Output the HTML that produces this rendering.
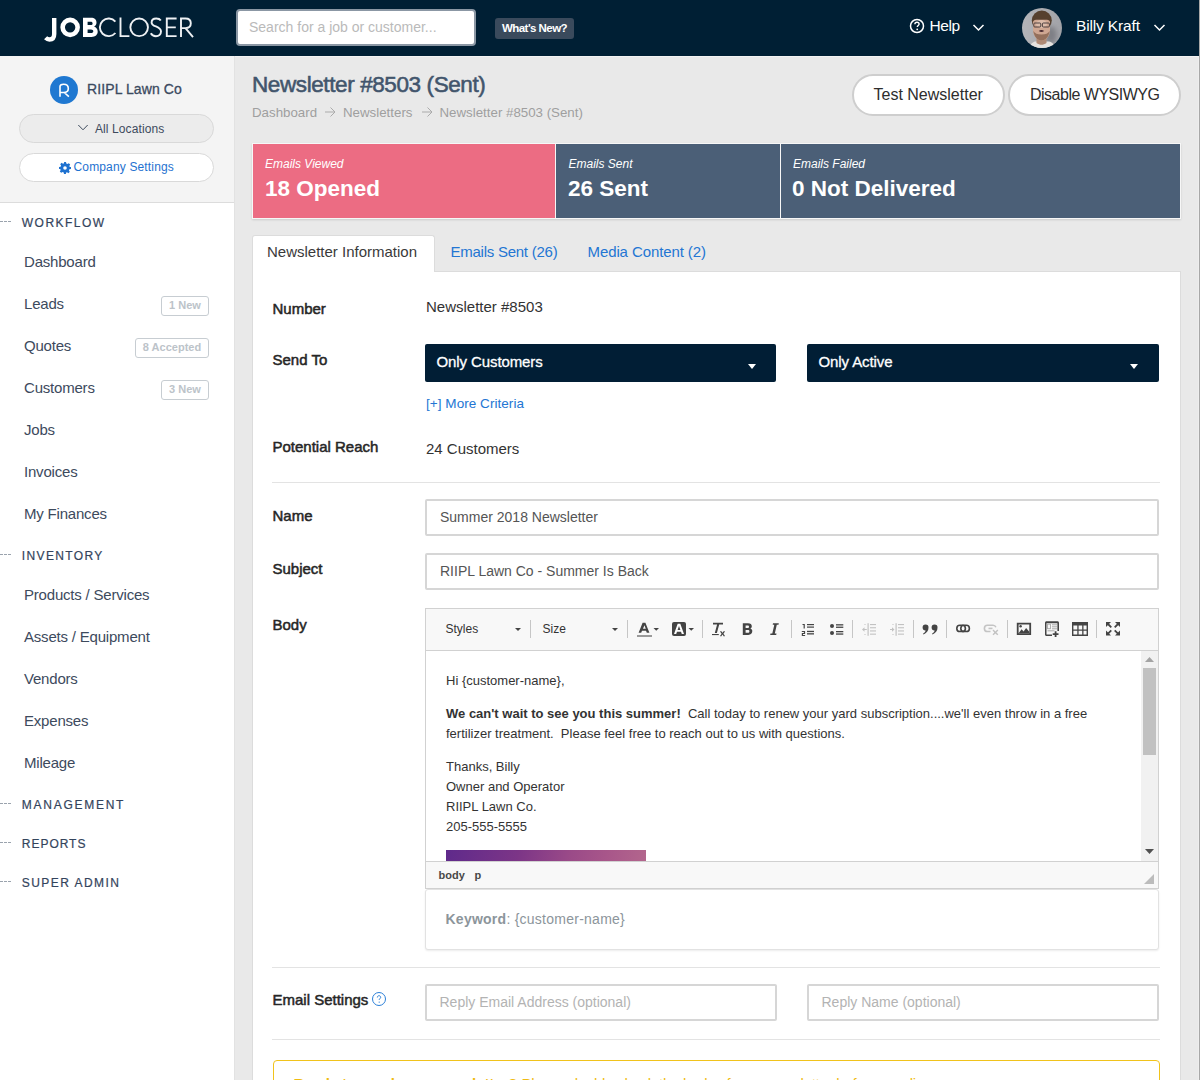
<!DOCTYPE html>
<html><head><meta charset="utf-8">
<style>
*{box-sizing:border-box;margin:0;padding:0}
html,body{width:1200px;height:1080px;overflow:hidden;background:#e9e9e9;font-family:"Liberation Sans",sans-serif;color:#333}
.a{position:absolute}
.t{position:absolute;white-space:nowrap;line-height:1}
#hdr{position:absolute;left:0;top:0;width:1200px;height:56px;background:#001f34}
.nav{color:#3d4a5d;font-size:15px;letter-spacing:-0.2px}
.sec{color:#33445c;font-size:12px;-webkit-text-stroke:0.2px #33445c}
.dash{position:absolute;left:0;width:11px;height:1px;border-top:1px dashed #9aa3ad}
.badge{position:absolute;height:20px;border:1px solid #c7cdd2;border-radius:3px;color:#bcc3c9;font-size:11px;font-weight:bold;line-height:17px;text-align:center}
.lbl{color:#262626;font-size:15px;-webkit-text-stroke:0.5px #262626}
.val{color:#333;font-size:15px}
.inp{position:absolute;background:#fff;border:2px solid #d6d6d6;border-radius:2px}
.sel{position:absolute;background:#011e35;border-radius:2px}
.sep{position:absolute;width:1px;background:#d3d3d3}
.hr{position:absolute;left:272px;width:888px;height:1px;background:#e3e3e3}
</style></head><body>
<!-- HEADER -->
<div id="hdr">
  <svg class="a" style="left:40px;top:12px" width="160" height="34" viewBox="40 12 160 34">
   <path d="M54.2 17.9V34C54.2 38 52 39.5 49.5 39.5C47.8 39.5 46.6 38.8 45.6 37.8" fill="none" stroke="#fff" stroke-width="4.4"/>
   <circle cx="70.15" cy="27.35" r="7.5" fill="none" stroke="#fff" stroke-width="4.6"/>
   <path fill="#fff" fill-rule="evenodd" d="M83 17.7H91C94.5 17.7 96.5 19.6 96.5 22.4C96.5 24.4 95.5 25.8 94 26.6C96.3 27.4 97.7 29.3 97.7 31.6C97.7 34.8 95.4 37 91.5 37H83ZM87.6 21.8H90.6C91.9 21.8 92.6 22.5 92.6 23.4C92.6 24.3 91.9 25 90.6 25H87.6ZM87.6 29.4H91C92.5 29.4 93.3 30.2 93.3 31.2C93.3 32.2 92.5 33 91 33H87.6Z"/>
   <g fill="none" stroke="#eef1f4" stroke-width="1.9">
    <path d="M115.4 21.7A8.8 8.8 0 1 0 115.4 33.0"/>
    <path d="M120.5 17.6V36.1H129.4"/>
    <circle cx="139.15" cy="27.35" r="8.8"/>
    <path d="M160.8 20.5C159.8 18.9 158.2 18.5 156.3 18.5C153.4 18.5 151.6 20.1 151.6 22.4C151.6 27.3 161 25.6 161 31.6C161 34.5 158.7 36.2 155.9 36.2C153.6 36.2 151.8 35.1 150.8 33.3"/>
    <path d="M176.6 18.5H166.8V36.1H176.6M166.8 27.35H175.8"/>
    <path d="M181 37.1V18.5H185.5C188.8 18.5 190.8 20.5 190.8 23.3C190.8 26.1 188.8 28.1 185.5 28.1H181M185.5 28.1L193 37.1"/>
   </g>
  </svg>
  <div class="a" style="left:236px;top:9px;width:240px;height:37px;background:#fff;border:2px solid #8b97a4;border-radius:4px"></div>
  <div class="t" style="left:249px;top:20px;font-size:14px;color:#bababa">Search for a job or customer...</div>
  <div class="a" style="left:495px;top:18px;width:79px;height:21px;background:#3a4a5c;border-radius:3px"></div>
  <div class="t" style="left:502px;top:22.6px;font-size:11.5px;color:#fff;font-weight:bold;letter-spacing:-0.55px">What's New?</div>
  <svg class="a" style="left:909px;top:18.3px" width="16" height="16" viewBox="0 0 16 16"><circle cx="8" cy="8" r="6.5" fill="none" stroke="#fff" stroke-width="1.5"/><path d="M5.9 6.3c0-1.3 1-2.1 2.1-2.1s2.1.8 2.1 1.9c0 1.4-1.8 1.5-1.8 3" fill="none" stroke="#fff" stroke-width="1.4"/><circle cx="8.2" cy="11.3" r="0.9" fill="#fff"/></svg>
  <div class="t" style="left:929.5px;top:18.4px;font-size:15.5px;color:#fff;letter-spacing:-0.4px">Help</div>
  <svg class="a" style="left:972px;top:23px" width="13" height="9" viewBox="0 0 13 9"><path d="M1.5 2l5 5 5-5" fill="none" stroke="#fff" stroke-width="1.5"/></svg>
  <svg class="a" style="left:1022px;top:8px" width="40" height="40" viewBox="0 0 40 40">
    <defs><clipPath id="av"><circle cx="20" cy="20" r="20"/></clipPath>
    <filter id="bl" x="-20%" y="-20%" width="140%" height="140%"><feGaussianBlur stdDeviation="0.6"/></filter>
    <filter id="bl2" x="-50%" y="-50%" width="200%" height="200%"><feGaussianBlur stdDeviation="2.5"/></filter>
    <linearGradient id="avbg" x1="0" y1="0" x2="1" y2="0"><stop offset="0" stop-color="#b4b5b9"/><stop offset="1" stop-color="#a2a3a8"/></linearGradient></defs>
    <g clip-path="url(#av)">
      <rect width="40" height="40" fill="url(#avbg)"/>
      <ellipse cx="29" cy="27" rx="6" ry="9" fill="#7e7f85" filter="url(#bl2)"/>
      <g filter="url(#bl)">
      <path d="M7 41c1-5 4-7 6-7.5h14c3 .5 5 2.5 6 7.5z" fill="#e6e2df"/>
      <path d="M14.5 29h10v6c-1.5 1.2-3.5 1.8-5 1.8s-3.5-.6-5-1.8z" fill="#b08a74"/>
      <ellipse cx="19.8" cy="12.5" rx="10" ry="10" fill="#56402f"/>
      <path d="M11 14c0-1 1.5-2.3 3-2.3h11c1.5 0 3 1.3 3 2.3v8c0 6-4 10.5-8.5 10.5S11 28 11 22z" fill="#cfa792"/>
      <ellipse cx="19.5" cy="16" rx="5.5" ry="4" fill="#dcbcaa"/>
      <path d="M11.3 23c.8 5.5 4 9.5 8.2 9.5s7.4-4 8.2-9.5c-1.5 2.5-4 3.5-8.2 3.5s-6.7-1-8.2-3.5z" fill="#94705c"/>
      <g fill="none" stroke="#3e3434" stroke-width="0.9"><rect x="11.8" y="15" width="7" height="4" rx="1"/><rect x="20.4" y="15" width="7" height="4" rx="1"/></g>
      <path d="M16.8 23c1-.8 1.8-1 2.7-1s1.8.2 2.7 1c-.9.6-1.8.9-2.7.9s-1.8-.3-2.7-.9z" fill="#4a2b32"/>
      </g>
    </g>
  </svg>
  <div class="t" style="left:1076px;top:18.4px;font-size:15.5px;color:#fff;letter-spacing:-0.15px">Billy Kraft</div>
  <svg class="a" style="left:1153px;top:23px" width="13" height="9" viewBox="0 0 13 9"><path d="M1.5 2l5 5 5-5" fill="none" stroke="#fff" stroke-width="1.5"/></svg>
</div>

<!-- SIDEBAR -->
<div class="a" style="left:0;top:56px;width:234px;height:1024px;background:#fff"></div>
<div class="a" style="left:0;top:56px;width:234px;height:147px;background:#f4f4f4;border-bottom:1px solid #dcdcdc"></div>
<div class="a" style="left:50px;top:75.8px;width:28px;height:28px;border-radius:50%;background:#1f78d1"></div>
<svg class="a" style="left:50px;top:76px" width="28" height="28" viewBox="50 76 28 28"><path d="M60 96.7V86.6C60 85.1 61.5 84.3 63.6 84.3C66.5 84.3 68.3 86.2 68.3 88.5C68.3 90.9 66.5 92.5 63.6 92.5H60M64.2 92.5L68.9 96.7" fill="none" stroke="#fff" stroke-width="1.6"/></svg>
<div class="t" style="left:87px;top:82px;font-size:14px;color:#3b4a60;letter-spacing:0.1px;-webkit-text-stroke:0.3px #3b4a60">RIIPL Lawn Co</div>
<div class="a" style="left:19px;top:114px;width:195px;height:29px;border-radius:15px;background:#ececec;border:1px solid #d9d9d9"></div>
<svg class="a" style="left:77px;top:124px" width="12" height="8" viewBox="0 0 12 8"><path d="M1.3 1l4.7 4.8 4.7-4.8" fill="none" stroke="#3d4a5d" stroke-width="1"/></svg>
<div class="t" style="left:95px;top:122.6px;font-size:12px;color:#3d4a5d;letter-spacing:0.1px">All Locations</div>
<div class="a" style="left:19px;top:153px;width:195px;height:29px;border-radius:15px;background:#fff;border:1px solid #d9d9d9"></div>
<svg class="a" style="left:59px;top:162px" width="12" height="12" viewBox="0 0 12 12"><path fill="#1f72d0" d="M5 0h2l.3 1.6 1.1.5 1.4-.9 1.4 1.4-.9 1.4.5 1.1L12 5v2l-1.6.3-.5 1.1.9 1.4-1.4 1.4-1.4-.9-1.1.5L7 12H5l-.3-1.6-1.1-.5-1.4.9-1.4-1.4.9-1.4-.5-1.1L0 7V5l1.6-.3.5-1.1-.9-1.4 1.4-1.4 1.4.9 1.1-.5z"/><circle cx="6" cy="6" r="1.8" fill="#fff"/></svg>
<div class="t" style="left:73.5px;top:161.2px;font-size:12px;color:#1f72d0;letter-spacing:0.15px">Company Settings</div>

<div class="dash" style="top:221px"></div>
<div class="t sec" style="left:21.8px;top:217.3px;letter-spacing:1.46px">WORKFLOW</div>
<div class="t nav" style="left:24px;top:253.6px">Dashboard</div>
<div class="t nav" style="left:24px;top:295.6px">Leads</div>
<div class="badge" style="left:161px;top:296px;width:48px">1 New</div>
<div class="t nav" style="left:24px;top:337.6px">Quotes</div>
<div class="badge" style="left:135px;top:338px;width:74px">8 Accepted</div>
<div class="t nav" style="left:24px;top:379.6px">Customers</div>
<div class="badge" style="left:161px;top:380px;width:48px">3 New</div>
<div class="t nav" style="left:24px;top:421.6px">Jobs</div>
<div class="t nav" style="left:24px;top:463.6px">Invoices</div>
<div class="t nav" style="left:24px;top:505.6px">My Finances</div>

<div class="dash" style="top:554px"></div>
<div class="t sec" style="left:21.8px;top:550.3px;letter-spacing:1.36px">INVENTORY</div>
<div class="t nav" style="left:24px;top:586.6px">Products / Services</div>
<div class="t nav" style="left:24px;top:628.6px">Assets / Equipment</div>
<div class="t nav" style="left:24px;top:670.6px">Vendors</div>
<div class="t nav" style="left:24px;top:712.6px">Expenses</div>
<div class="t nav" style="left:24px;top:754.6px">Mileage</div>

<div class="dash" style="top:803px"></div>
<div class="t sec" style="left:21.8px;top:799.3px;letter-spacing:1.73px">MANAGEMENT</div>
<div class="dash" style="top:842px"></div>
<div class="t sec" style="left:21.8px;top:838.3px;letter-spacing:0.97px">REPORTS</div>
<div class="dash" style="top:881px"></div>
<div class="t sec" style="left:21.8px;top:877.3px;letter-spacing:1.44px">SUPER ADMIN</div>
<div class="a" style="left:234px;top:56px;width:1px;height:1024px;background:#e2e2e2"></div>


<!-- MAIN -->
<div class="t" style="left:252px;top:74px;font-size:22.5px;color:#42556c;letter-spacing:-0.4px;-webkit-text-stroke:0.55px #42556c">Newsletter #8503 (Sent)</div>
<div class="t" style="left:252px;top:105.6px;font-size:13.3px;color:#9f9f9f">Dashboard</div>
<svg class="a" style="left:324px;top:106px" width="13" height="12" viewBox="0 0 13 12"><path d="M1 6h10M6.5 1.5L11 6l-4.5 4.5" fill="none" stroke="#ababab" stroke-width="1"/></svg>
<div class="t" style="left:343px;top:105.6px;font-size:13.3px;color:#9f9f9f">Newsletters</div>
<svg class="a" style="left:421px;top:106px" width="13" height="12" viewBox="0 0 13 12"><path d="M1 6h10M6.5 1.5L11 6l-4.5 4.5" fill="none" stroke="#ababab" stroke-width="1"/></svg>
<div class="t" style="left:439.5px;top:105.6px;font-size:13.3px;color:#9f9f9f">Newsletter #8503 (Sent)</div>

<div class="a" style="left:852px;top:74px;width:153px;height:42px;border-radius:21px;background:#fff;border:2px solid #cecece"></div>
<div class="t" style="left:873.5px;top:87.3px;font-size:16px;color:#2d2d2d">Test Newsletter</div>
<div class="a" style="left:1008px;top:74px;width:173px;height:42px;border-radius:21px;background:#fff;border:2px solid #cecece"></div>
<div class="t" style="left:1030px;top:87.3px;font-size:16px;color:#2d2d2d;letter-spacing:-0.5px">Disable WYSIWYG</div>

<div class="a" style="left:252px;top:143px;width:929px;height:76px;background:#f7f7f7;box-shadow:0 1px 2px rgba(0,0,0,0.12)"></div>
<div class="a" style="left:253px;top:144px;width:302px;height:74px;background:#ec6c83"></div>
<div class="a" style="left:556px;top:144px;width:224px;height:74px;background:#4b5f77"></div>
<div class="a" style="left:781px;top:144px;width:399px;height:74px;background:#4b5f77"></div>
<div class="t" style="left:265px;top:157.5px;font-size:12px;color:#fff;font-style:italic">Emails Viewed</div>
<div class="t" style="left:265px;top:177.8px;font-size:22.5px;color:#fff;font-weight:bold">18 Opened</div>
<div class="t" style="left:568.5px;top:157.5px;font-size:12px;color:#fff;font-style:italic">Emails Sent</div>
<div class="t" style="left:568px;top:177.8px;font-size:22.5px;color:#fff;font-weight:bold">26 Sent</div>
<div class="t" style="left:793px;top:157.5px;font-size:12px;color:#fff;font-style:italic">Emails Failed</div>
<div class="t" style="left:792px;top:177.8px;font-size:22.5px;color:#fff;font-weight:bold">0 Not Delivered</div>

<!-- tabs -->
<div class="a" style="left:252px;top:235px;width:183px;height:37px;background:#fff;border:1px solid #dcdcdc;border-bottom:none;border-radius:3px 3px 0 0"></div>
<div class="t" style="left:267px;top:244.2px;font-size:15px;color:#3a3a3a">Newsletter Information</div>
<div class="t" style="left:450.5px;top:244.2px;font-size:15px;color:#2376d3;letter-spacing:-0.25px">Emails Sent (26)</div>
<div class="t" style="left:587.5px;top:244.2px;font-size:15px;color:#2376d3;letter-spacing:-0.1px">Media Content (2)</div>

<!-- panel -->
<div class="a" style="left:252px;top:271px;width:929px;height:809px;background:#fff;border-left:1px solid #dcdcdc;border-right:1px solid #dcdcdc;border-top:1px solid #dcdcdc"></div>
<div class="a" style="left:253px;top:271px;width:181px;height:2px;background:#fff"></div>


<!-- FORM -->
<div class="t lbl" style="left:272.5px;top:300.6px">Number</div>
<div class="t val" style="left:426px;top:298.6px">Newsletter #8503</div>
<div class="t lbl" style="left:272.5px;top:351.9px">Send To</div>
<div class="sel" style="left:425px;top:344px;width:351px;height:38px"></div>
<div class="t" style="left:436.5px;top:353.6px;font-size:15px;color:#fff;letter-spacing:-0.1px;-webkit-text-stroke:0.3px #fff">Only Customers</div>
<svg class="a" style="left:748px;top:364px" width="8" height="5" viewBox="0 0 8 5"><path d="M0 0h8L4 5z" fill="#fff"/></svg>
<div class="sel" style="left:807px;top:344px;width:352px;height:38px"></div>
<div class="t" style="left:818.5px;top:353.6px;font-size:15px;color:#fff;letter-spacing:-0.1px;-webkit-text-stroke:0.3px #fff">Only Active</div>
<svg class="a" style="left:1130px;top:364px" width="8" height="5" viewBox="0 0 8 5"><path d="M0 0h8L4 5z" fill="#fff"/></svg>
<div class="t" style="left:426px;top:396.8px;font-size:13.5px;color:#2376d3;letter-spacing:0.05px">[+] More Criteria</div>
<div class="t lbl" style="left:272.5px;top:439.3px">Potential Reach</div>
<div class="t val" style="left:426px;top:441.3px">24 Customers</div>
<div class="hr" style="top:482px"></div>

<div class="t lbl" style="left:272.5px;top:507.8px">Name</div>
<div class="inp" style="left:425px;top:499px;width:734px;height:37px"></div>
<div class="t" style="left:440px;top:510.3px;font-size:14px;color:#555">Summer 2018 Newsletter</div>
<div class="t lbl" style="left:272.5px;top:561.2px">Subject</div>
<div class="inp" style="left:425px;top:553px;width:734px;height:37px"></div>
<div class="t" style="left:440px;top:564.2px;font-size:14px;color:#555">RIIPL Lawn Co - Summer Is Back</div>
<div class="t lbl" style="left:272.5px;top:616.7px">Body</div>

<!-- EDITOR -->
<div class="a" style="left:425px;top:608px;width:734px;height:281px;border:1px solid #d1d1d1;background:#f8f8f8"></div>
<div class="a" style="left:426px;top:650px;width:732px;height:1px;background:#d1d1d1"></div>
<div class="a" style="left:426px;top:651px;width:732px;height:210px;background:#fff;overflow:hidden">
  <div class="a" style="left:20px;top:1px;width:690px;font-size:13px;line-height:20px;color:#333">
    <div class="a" style="top:19px;white-space:nowrap">Hi {customer-name},</div>
    <div class="a" style="top:52px;width:690px"><b>We can't wait to see you this summer!</b>&nbsp; Call today to renew your yard subscription....we'll even throw in a free fertilizer treatment.&nbsp; Please feel free to reach out to us with questions.</div>
    <div class="a" style="top:105px;white-space:nowrap">Thanks, Billy<br>Owner and Operator<br>RIIPL Lawn Co.<br>205-555-5555</div>
    <div class="a" style="left:0;top:198px;width:200px;height:40px;background:linear-gradient(100deg,#5f2a8b 0%,#7c3587 35%,#9a4a88 60%,#a8568a 78%,#b4688d 100%)"></div>
  </div>
  <div class="a" style="left:715px;top:0;width:17px;height:210px;background:#f1f1f1"></div>
  <div class="a" style="left:717px;top:17px;width:13px;height:87px;background:#c1c1c1"></div>
  <svg class="a" style="left:719px;top:6px" width="9" height="5" viewBox="0 0 9 5"><path d="M0 5h9L4.5 0z" fill="#a3a3a3"/></svg>
  <svg class="a" style="left:719px;top:198px" width="9" height="5" viewBox="0 0 9 5"><path d="M0 0h9L4.5 5z" fill="#505050"/></svg>
</div>
<div class="a" style="left:426px;top:861px;width:732px;height:1px;background:#d1d1d1"></div>
<div class="t" style="left:438.5px;top:869.5px;font-size:11px;font-weight:bold;color:#484848">body</div>
<div class="t" style="left:474.5px;top:869.5px;font-size:11px;font-weight:bold;color:#484848">p</div>
<svg class="a" style="left:1144px;top:874px" width="10" height="10" viewBox="0 0 10 10"><path d="M10 0V10H0z" fill="#bcbcbc"/></svg>
<div class="a" style="left:425px;top:889px;width:734px;height:61px;border:1px solid #e2e2e2;border-radius:3px;background:#fff;box-shadow:0 1px 2px rgba(0,0,0,0.08)"></div>
<div class="t" style="left:445.5px;top:912px;font-size:14px;color:#8c959b;letter-spacing:0.25px"><b>Keyword</b>: {customer-name}</div>
<!-- TOOLBAR -->
<div class="t" style="left:445.5px;top:623px;font-size:12px;color:#333">Styles</div>
<div class="t" style="left:542.5px;top:623px;font-size:12px;color:#333">Size</div>
<svg class="a" style="left:426px;top:609px" width="732" height="41" viewBox="426 609 732 41">
 <g fill="#c6c6c6">
  <rect x="530" y="620" width="1" height="18"/><rect x="627" y="620" width="1" height="18"/>
  <rect x="702" y="620" width="1" height="18"/><rect x="791" y="620" width="1" height="18"/>
  <rect x="852" y="620" width="1" height="18"/><rect x="913" y="620" width="1" height="18"/>
  <rect x="946" y="620" width="1" height="18"/><rect x="1007" y="620" width="1" height="18"/>
  <rect x="1096" y="620" width="1" height="18"/>
 </g>
 <g fill="#444">
  <path d="M515 628h6l-3 3z"/><path d="M612 628h6l-3 3z"/>
  <path d="M653.5 628h5.5l-2.75 2.75z"/><path d="M688.5 628h5.5l-2.75 2.75z"/>
  <!-- text color A -->
  <path d="M642.6 622.8h2.8l4 10h-2.6l-.8-2.1h-4l-.8 2.1h-2.6zM643 628.8h2.8l-1.4-3.6z"/>
  <rect x="637" y="635" width="15" height="2" fill="#9a9a9a"/>
  <!-- bg color -->
  <rect x="672" y="622" width="14" height="14" rx="2"/>
  <path d="M677.7 623.8h2.6l3.7 10.2h-2.2l-.8-2.2h-4l-.8 2.2h-2.2zM677.6 630h2.8l-1.4-4z" fill="#fff"/>
  <!-- Tx -->
  <path d="M713 622.8h10v1.8h-3.8l-2.3 8.4h-2.1l2.3-8.4h-4.1z"/>
  <rect x="712" y="634" width="6.8" height="1.1"/>
  <path d="M720 631.5l1.1-.6 1.4 1.9 1.4-1.9 1.1.6-1.6 2.2 1.6 2.2-1.1.6-1.4-1.9-1.4 1.9-1.1-.6 1.6-2.2z"/>
  <!-- B -->
  <path d="M742.8 623.2h5.2c2.6 0 3.8 1.3 3.8 3 0 1.1-.6 1.9-1.5 2.3 1.3.4 2 1.4 2 2.6 0 2-1.4 3.9-4 3.9h-5.5zM745.6 625.5v2.5h2c.9 0 1.4-.5 1.4-1.25s-.5-1.25-1.4-1.25zM745.6 630.1v2.6h2.3c1 0 1.5-.55 1.5-1.3s-.5-1.3-1.5-1.3z"/>
  <!-- I -->
  <path d="M773 623.2h5.8l-.3 1.5h-1.7l-2 8.8h1.7l-.3 1.5h-6l.3-1.5h1.8l2-8.8h-1.6z"/>
  <!-- ol -->
  <path d="M802.5 624h2.3v4.6h-1.2v-3.5h-1.1z"/>
  <path d="M801.8 631h3.3v3h-2.1v1h2.1v1h-3.3v-3h2.1v-1h-2.1z"/>
  <rect x="807" y="624" width="7" height="1.2"/><rect x="807" y="626.5" width="7" height="1.2"/>
  <rect x="807" y="630.8" width="7" height="1.3"/><rect x="807" y="633.2" width="7" height="1.3"/>
  <!-- ul -->
  <circle cx="832" cy="626" r="2"/><circle cx="832" cy="633" r="2"/>
  <rect x="836" y="624.2" width="7.3" height="1.3"/><rect x="836" y="626.6" width="7.3" height="1.3"/>
  <rect x="836" y="631" width="7.3" height="1.3"/><rect x="836" y="633.4" width="7.3" height="1.3"/>
  <!-- quote -->
  <path d="M925.5 624.5a3 3 0 0 1 3 3.2c0 3-2 5.5-5 6.8l-.5-.8c1.5-.9 2.4-2 2.6-3.3a2.9 2.9 0 0 1-.1-5.9z"/>
  <path d="M934.5 624.5a3 3 0 0 1 3 3.2c0 3-2 5.5-5 6.8l-.5-.8c1.5-.9 2.4-2 2.6-3.3a2.9 2.9 0 0 1-.1-5.9z"/>
  <!-- image -->
  <path d="M1016.8 622.8h14.3v12.2h-14.3zM1018.6 624.5v8.8h10.7v-8.8z" fill-rule="evenodd"/>
  <circle cx="1020.6" cy="626.3" r="1.2"/>
  <path d="M1018.6 633.3l3-4 2 2.2 2.5-3.5 3.2 3.8v1.5z"/>
  <!-- template -->
  <path d="M1046.5 621.2h11c.8 0 1.5.7 1.5 1.5v8.3h-1.6v-7.8h-10.9v11.2h5.5v1.6h-5.5c-.8 0-1.5-.7-1.5-1.5v-11.8c0-.8.7-1.5 1.5-1.5z"/>
  <rect x="1047.5" y="624.2" width="3" height="4.5" fill="none" stroke="#aaa" stroke-width="0.9"/>
  <rect x="1052" y="624.3" width="5" height="1" fill="#aaa"/><rect x="1052" y="626.3" width="5" height="1" fill="#aaa"/>
  <rect x="1052" y="628.3" width="5" height="1" fill="#aaa"/><rect x="1047.5" y="630.3" width="7" height="1" fill="#aaa"/>
  <path d="M1054.7 631.3h1.8v2h2v1.8h-2v2h-1.8v-2h-2v-1.8h2z"/>
  <!-- table -->
  <path d="M1072 622h16v14h-16zM1073.4 625.6v3.9h3.9v-3.9zM1078.6 625.6v3.9h3.6v-3.9zM1083.5 625.6v3.9h3.1v-3.9zM1073.4 630.8v3.8h3.9v-3.8zM1078.6 630.8v3.8h3.6v-3.8zM1083.5 630.8v3.8h3.1v-3.8z" fill-rule="evenodd"/>
  <!-- maximize -->
  <path d="M1106 622h5l-5 5z"/><path d="M1120 622h-5l5 5z"/><path d="M1106 635.6h5l-5-5z"/><path d="M1120 635.6h-5l5-5z"/>
  <g stroke="#444" stroke-width="1.8"><path d="M1107.5 623.5l3.8 3.8M1118.5 623.5l-3.8 3.8M1107.5 634.1l3.8-3.8M1118.5 634.1l-3.8-3.8"/></g>
  <!-- link -->
  <g fill="none" stroke="#444" stroke-width="1.6"><rect x="956.8" y="625.3" width="8.6" height="6.2" rx="3.1"/><rect x="960.8" y="625.3" width="8.6" height="6.2" rx="3.1"/></g>
 </g>
 <g fill="#c2c2c2">
  <!-- unlink -->
  <g fill="none" stroke="#c4c4c4" stroke-width="1.6"><path d="M990.5 631.5h-3a3.1 3.1 0 0 1 0-6.2h5.5a3.1 3.1 0 0 1 2.9 2"/><path d="M988.5 628.4h4"/></g>
  <path d="M992.5 630.5l1-1 1.9 1.9 1.9-1.9 1 1-1.9 1.9 1.9 1.9-1 1-1.9-1.9-1.9 1.9-1-1 1.9-1.9z"/>
  <!-- outdent -->
  <rect x="867.5" y="623.2" width="1.2" height="12.6"/>
  <rect x="870" y="624" width="6" height="1.1"/><rect x="870" y="627.2" width="6" height="1.1"/>
  <rect x="870" y="630.4" width="6" height="1.1"/><rect x="870" y="633.6" width="6" height="1.1"/>
  <path d="M862 629.5l2.5-2.2v1.6h2.3v1.2h-2.3v1.6z"/>
  <rect x="864.5" y="624" width="1" height="1"/><rect x="864.5" y="634" width="1" height="1"/>
  <!-- indent -->
  <rect x="895.5" y="623.2" width="1.2" height="12.6"/>
  <rect x="898" y="624" width="6" height="1.1"/><rect x="898" y="627.2" width="6" height="1.1"/>
  <rect x="898" y="630.4" width="6" height="1.1"/><rect x="898" y="633.6" width="6" height="1.1"/>
  <path d="M894.5 629.5l-2.5-2.2v1.6h-2v1.2h2v1.6z"/>
  <rect x="892.5" y="624" width="1" height="1"/><rect x="892.5" y="634" width="1" height="1"/>
 </g>
</svg>

<div class="hr" style="top:967px"></div>
<div class="t lbl" style="left:272.5px;top:992.3px">Email Settings</div>
<svg class="a" style="left:370.6px;top:990.5px" width="16" height="16" viewBox="0 0 16 16"><circle cx="8" cy="8" r="6.5" fill="none" stroke="#2b7fd8" stroke-width="1"/><path d="M6.3 6.5c0-1.1.8-1.8 1.7-1.8s1.7.7 1.7 1.6c0 1.2-1.5 1.3-1.5 2.6" fill="none" stroke="#2b7fd8" stroke-width="1"/><circle cx="8.2" cy="11.1" r="0.65" fill="#2b7fd8"/></svg>
<div class="inp" style="left:425px;top:984px;width:352px;height:37px"></div>
<div class="t" style="left:439.5px;top:994.7px;font-size:14px;color:#b3b3b3">Reply Email Address (optional)</div>
<div class="inp" style="left:807px;top:984px;width:352px;height:37px"></div>
<div class="t" style="left:821.5px;top:994.7px;font-size:14px;color:#b3b3b3">Reply Name (optional)</div>
<div class="hr" style="top:1039px"></div>
<div class="a" style="left:273px;top:1060px;width:887px;height:60px;border:1.5px solid #f1c31c;border-radius:4px;background:#fff"></div>
<div class="t" style="left:293.5px;top:1075.5px;font-size:15px;color:#efbb12"><b style="letter-spacing:-0.1px">Ready to send your newsletter?</b> <span style="letter-spacing:-0.25px">Please double check the body of your newsletter before sending.</span></div>

<div class="a" style="left:235px;top:56px;width:965px;height:1px;background:#f3f3f3"></div>
<div class="a" style="left:1198px;top:56px;width:1px;height:1024px;background:#eeeeee"></div>
<div class="a" style="left:1199px;top:0;width:1px;height:1080px;background:#a8a8a8"></div>
</body></html>
